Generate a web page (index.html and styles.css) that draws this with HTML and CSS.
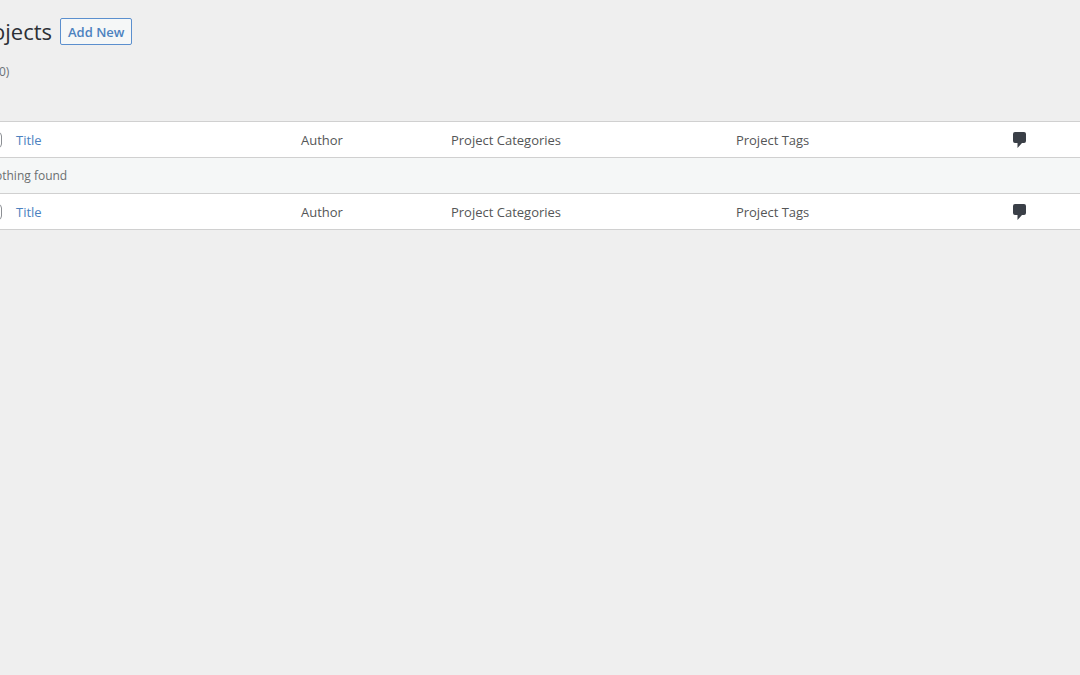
FILE: index.html
```html
<!DOCTYPE html>
<html lang="en">
<head>
  <meta charset="UTF-8">
  <meta name="viewport" content="width=device-width, initial-scale=1.0">
  <title>Projects</title>
  <link rel="stylesheet" href="styles.css">
</head>
<body>

  <div class="wrap">
    <div class="page-header">
      <h1>ojects</h1>
      <a class="add-new" href="#">Add New</a>
    </div>

    <div class="count">0)</div>

    <table class="list-table">
      <thead>
        <tr>
          <td class="col-check"><input type="checkbox" aria-label="Select all"></td>
          <th class="col-title" scope="col"><a href="#">Title</a></th>
          <th class="col-author" scope="col">Author</th>
          <th class="col-categories" scope="col">Project Categories</th>
          <th class="col-tags" scope="col">Project Tags</th>
          <th class="col-comments" scope="col">
            <svg class="bubble" viewBox="0 0 14 16" aria-hidden="true"><path d="M2 0h9q2 0 2 2v7q0 2-2 2H9l-4.500 5V11H2q-2 0-2-2V2q0-2 2-2z"/></svg>
          </th>
        </tr>
      </thead>
      <tbody>
        <tr>
          <td class="empty" colspan="6">othing found</td>
        </tr>
      </tbody>
      <tfoot>
        <tr>
          <td class="col-check"><input type="checkbox" aria-label="Select all"></td>
          <th scope="col"><a href="#">Title</a></th>
          <th scope="col">Author</th>
          <th scope="col">Project Categories</th>
          <th scope="col">Project Tags</th>
          <th class="col-comments" scope="col">
            <svg class="bubble" viewBox="0 0 14 16" aria-hidden="true"><path d="M2 0h9q2 0 2 2v7q0 2-2 2H9l-4.500 5V11H2q-2 0-2-2V2q0-2 2-2z"/></svg>
          </th>
        </tr>
      </tfoot>
    </table>
  </div>

</body>
</html>
```

FILE: styles.css
```css
body {
  margin: 0;
  background-color: #efefef;
  color: #545657;
  font-family: "Segoe UI", "Open Sans", "Noto Sans", sans-serif;
  font-size: 13px;
  line-height: 20px;
  overflow-x: hidden;
}

a {
  color: #4c82bf;
  text-decoration: none;
}

.wrap {
  margin-left: -16px;
  padding-top: 18px;
}

.page-header {
  display: flex;
  align-items: center;
  gap: 8px;
  padding-left: 8px;
}

h1 {
  margin: 0;
  color: #2c3036;
  font-size: 22px;
  font-weight: 400;
  line-height: 27px;
}

.add-new {
  box-sizing: border-box;
  height: 27px;
  padding: 0 7px;
  border: 1px solid #5b8fce;
  border-radius: 2px;
  background-color: #f5f7f7;
  font-weight: 600;
  line-height: 27px;
}

.count {
  padding: 17px 0 39px 15px;
  color: #6b7178;
  font-size: 12px;
}

/* Projects list */
.list-table {
  width: 100%;
  border-collapse: collapse;
  table-layout: fixed;
  border-top: 1px solid #d0d0d0;
  border-bottom: 1px solid #d0d0d0;
  background-color: #fff;
}

.list-table th,
.list-table td {
  box-sizing: border-box;
  height: 36px;
  padding: 0 10px;
  font-weight: 400;
  text-align: left;
}

.list-table tbody td {
  border-top: 1px solid #d0d0d0;
  border-bottom: 1px solid #d0d0d0;
  background-color: #f5f7f7;
}

.list-table .col-check {
  width: 22px;
  padding: 0 0 0 2px;
}

.col-check input {
  display: block;
  appearance: none;
  width: 16px;
  height: 16px;
  margin: 0;
  border: 1px solid #8c8f94;
  border-radius: 4px;
  background-color: #fff;
}

.col-title,
.col-categories {
  width: 26%;
}

.col-author {
  width: 150px;
}

.col-comments {
  width: 77px;
}

.bubble {
  display: block;
  width: 14px;
  height: 16px;
  fill: #3a3f47;
}

.list-table .empty {
  padding-left: 11px;
  color: #6b6f70;
  font-size: 12px;
}
```
